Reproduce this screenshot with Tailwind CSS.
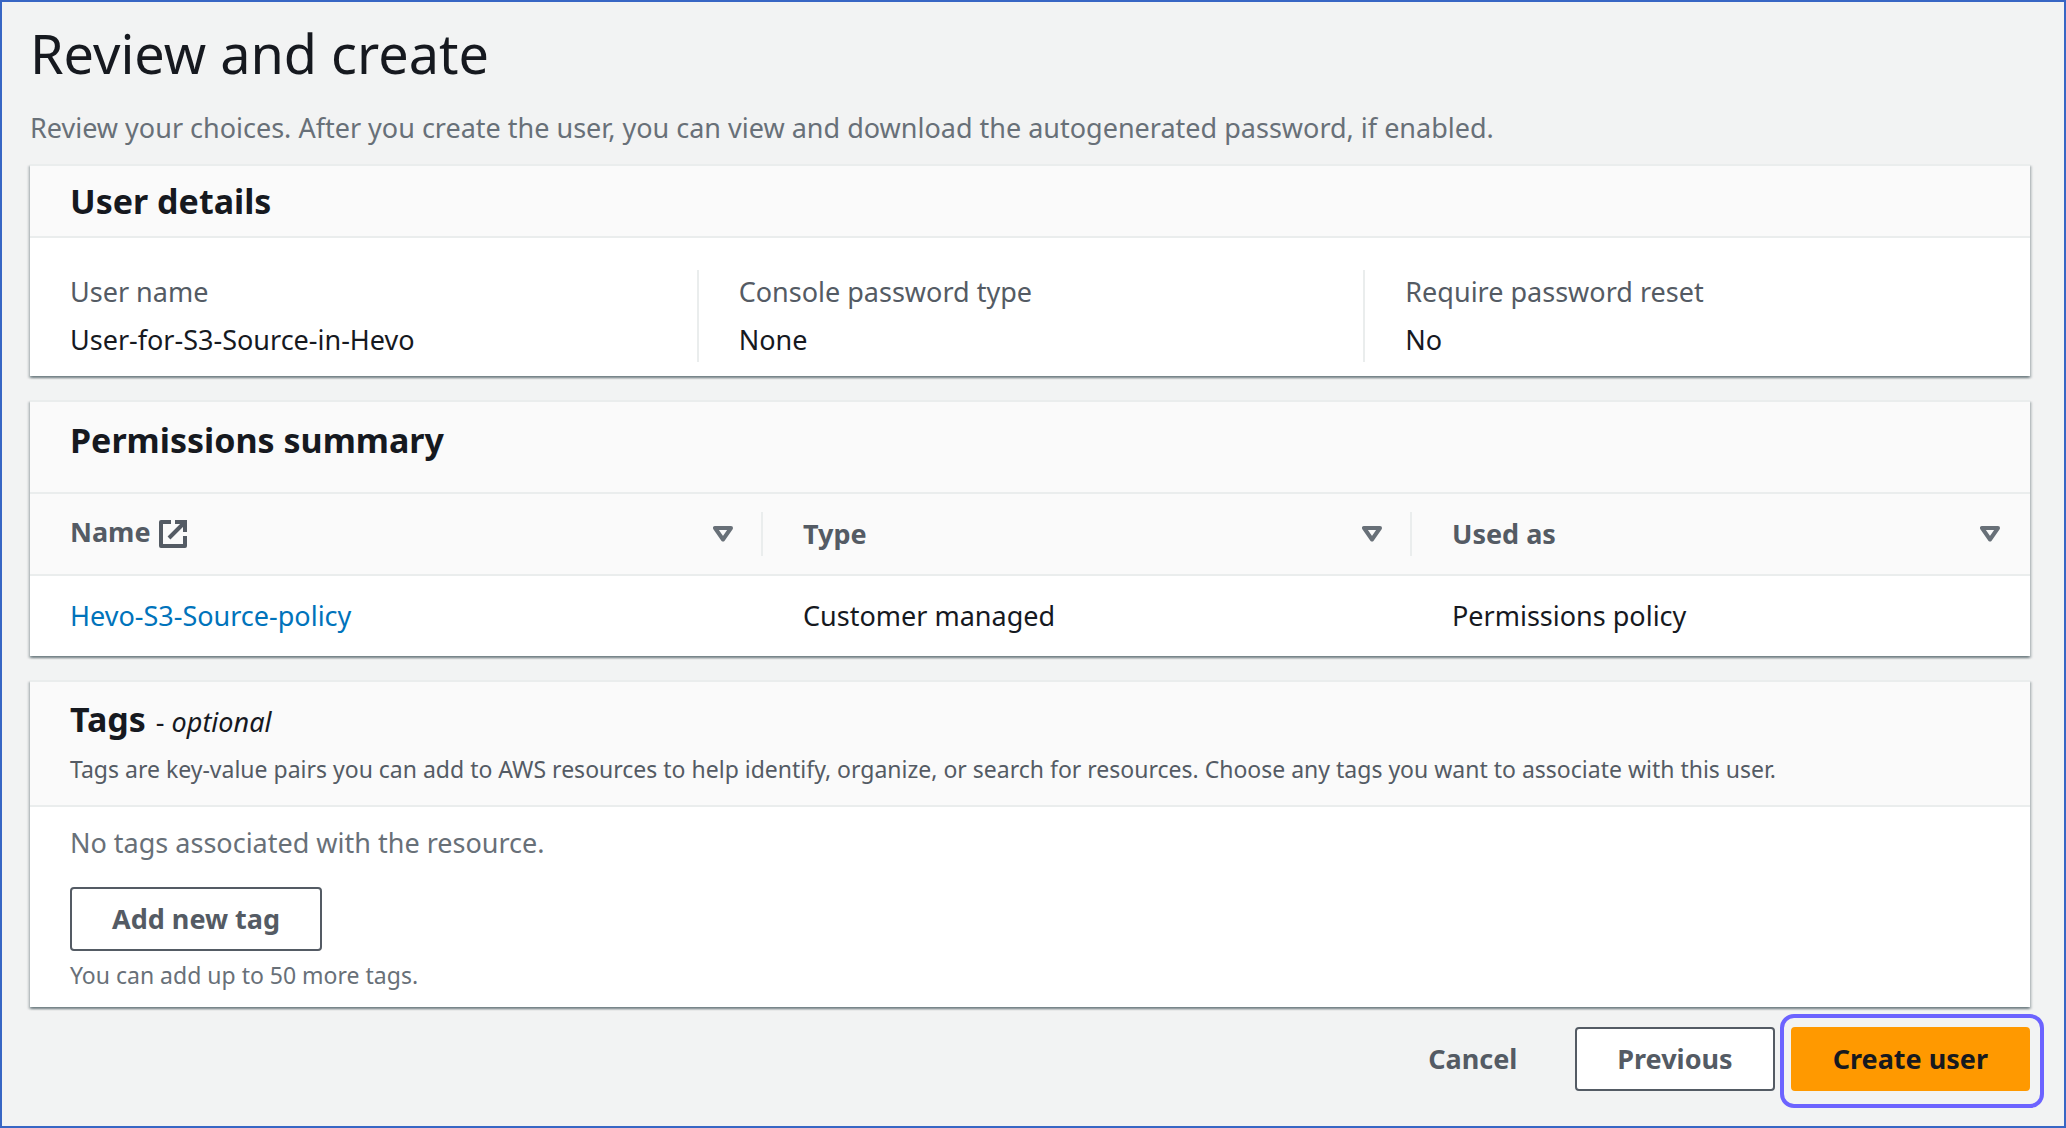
<!DOCTYPE html>
<html lang="en">
<head>
<meta charset="utf-8">
<meta name="viewport" content="width=device-width, initial-scale=1">
<title>Review and create</title>
<script src="https://cdn.jsdelivr.net/npm/@tailwindcss/browser@4"></script>
</head>
<body class="bg-[#f2f3f3] font-['Noto_Sans',sans-serif] text-[27px] leading-10 text-[#16191f]">
<main class="min-h-screen border-2 border-[#3866c4] px-7 pt-[19px]">
  <h1 class="text-[54px] leading-16">Review and create</h1>
  <p class="mt-[23px] text-[#687078]">Review your choices. After you create the user, you can view and download the autogenerated password, if enabled.</p>

  <div class="mt-4 mr-1.5 flex flex-col gap-6">
    <section class="border-t-2 border-[#eaeded] bg-white shadow-[0_2px_2px_0_rgba(0,28,36,0.35),2px_2px_2px_0_rgba(0,28,36,0.15),-2px_2px_2px_0_rgba(0,28,36,0.15)]">
      <header class="border-b-2 border-[#eaeded] bg-[#fafafa] px-10 py-[13px]">
        <h2 class="text-[34px] leading-11 font-bold">User details</h2>
      </header>
      <dl class="grid grid-cols-3 pt-8 pb-3.5">
        <div class="flex flex-col gap-2 py-0.5 pl-10">
          <dt class="text-[#545b64]">User name</dt>
          <dd>User-for-S3-Source-in-Hevo</dd>
        </div>
        <div class="flex flex-col gap-2 border-l-2 border-[#eaeded] py-0.5 pl-10">
          <dt class="text-[#545b64]">Console password type</dt>
          <dd>None</dd>
        </div>
        <div class="flex flex-col gap-2 border-l-2 border-[#eaeded] py-0.5 pl-10">
          <dt class="text-[#545b64]">Require password reset</dt>
          <dd>No</dd>
        </div>
      </dl>
    </section>

    <section class="border-t-2 border-[#eaeded] bg-white shadow-[0_2px_2px_0_rgba(0,28,36,0.35),2px_2px_2px_0_rgba(0,28,36,0.15),-2px_2px_2px_0_rgba(0,28,36,0.15)]">
      <header class="border-b-2 border-[#eaeded] bg-[#fafafa] px-10 pt-4 pb-[30px]">
        <h2 class="text-[34px] leading-11 font-bold">Permissions summary</h2>
      </header>
      <table class="w-full table-fixed border-separate border-spacing-0 text-left">
        <colgroup>
          <col class="w-[36.65%]">
          <col class="w-[32.45%]">
          <col>
        </colgroup>
        <thead class="bg-[#fafafa] text-[#545b64]">
          <tr>
            <th scope="col" class="border-b-2 border-[#eaeded] py-[18px] pl-10">
              <div class="flex h-11 items-center justify-between border-r-2 border-[#eaeded] pr-7">
                <span class="flex items-center gap-2"><span class="pb-1">Name</span>
                  <svg class="size-7" viewBox="0 0 28 28" fill="none" stroke="currentColor" stroke-width="4" aria-hidden="true"><path d="M12 2H2v24h24V16" stroke-linejoin="round"/><path d="M16 2h10v10M26 2L10 18"/></svg>
                </span>
                <button type="button" aria-label="Sort by name" class="text-[#687078]"><svg class="h-4 w-5" viewBox="0 0 20 16" fill="none" stroke="currentColor" stroke-width="4" stroke-linejoin="round" aria-hidden="true"><path d="M2 2h16L10 13.500z"/></svg></button>
              </div>
            </th>
            <th scope="col" class="border-b-2 border-[#eaeded] py-[18px] pl-10">
              <div class="flex h-11 items-center justify-between border-r-2 border-[#eaeded] pr-7">
                <span>Type</span>
                <button type="button" aria-label="Sort by type" class="text-[#687078]"><svg class="h-4 w-5" viewBox="0 0 20 16" fill="none" stroke="currentColor" stroke-width="4" stroke-linejoin="round" aria-hidden="true"><path d="M2 2h16L10 13.500z"/></svg></button>
              </div>
            </th>
            <th scope="col" class="border-b-2 border-[#eaeded] py-[18px] pl-10">
              <div class="flex h-11 items-center justify-between border-r-2 border-transparent pr-7">
                <span>Used as</span>
                <button type="button" aria-label="Sort by use" class="text-[#687078]"><svg class="h-4 w-5" viewBox="0 0 20 16" fill="none" stroke="currentColor" stroke-width="4" stroke-linejoin="round" aria-hidden="true"><path d="M2 2h16L10 13.500z"/></svg></button>
              </div>
            </th>
          </tr>
        </thead>
        <tbody>
          <tr>
            <td class="py-5 pl-10"><a href="#" class="text-[#0073bb]">Hevo-S3-Source-policy</a></td>
            <td class="py-5 pl-10">Customer managed</td>
            <td class="py-5 pl-10">Permissions policy</td>
          </tr>
        </tbody>
      </table>
    </section>

    <section class="border-t-2 border-[#eaeded] bg-white shadow-[0_2px_2px_0_rgba(0,28,36,0.35),2px_2px_2px_0_rgba(0,28,36,0.15),-2px_2px_2px_0_rgba(0,28,36,0.15)]">
      <header class="border-b-2 border-[#eaeded] bg-[#fafafa] px-10 pt-[15px] pb-5">
        <h2 class="flex items-baseline gap-2.5 text-[34px] leading-11 font-bold">Tags <span class="text-[27px] leading-8 font-normal">- <i>optional</i></span></h2>
        <p class="mt-3 text-[23px] leading-8 text-[#545b64]">Tags are key-value pairs you can add to AWS resources to help identify, organize, or search for resources. Choose any tags you want to associate with this user.</p>
      </header>
      <div class="px-10 py-4 text-[#687078]">
        <p>No tags associated with the resource.</p>
        <button type="button" class="mt-6 block h-16 rounded-sm border-2 border-[#545b64] bg-white px-10 font-bold text-[#545b64]">Add new tag</button>
        <p class="mt-2 text-[23px] leading-8">You can add up to 50 more tags.</p>
      </div>
    </section>
  </div>

  <div class="mt-5 mr-1.5 flex justify-end gap-4 font-bold">
    <button type="button" class="h-16 rounded-sm border-2 border-transparent px-10 text-[#545b64]">Cancel</button>
    <button type="button" class="h-16 rounded-sm border-2 border-[#545b64] bg-white px-10 text-[#545b64]">Previous</button>
    <div class="relative">
      <button type="button" class="block h-16 rounded-sm border-2 border-[#ff9900] bg-[#ff9900] px-10">Create user</button>
      <span class="pointer-events-none absolute -top-[13px] -right-3.5 -bottom-[17px] -left-[11px] rounded-[14px] border-4 border-[#6c63ff]"></span>
    </div>
  </div>
</main>
</body>
</html>
